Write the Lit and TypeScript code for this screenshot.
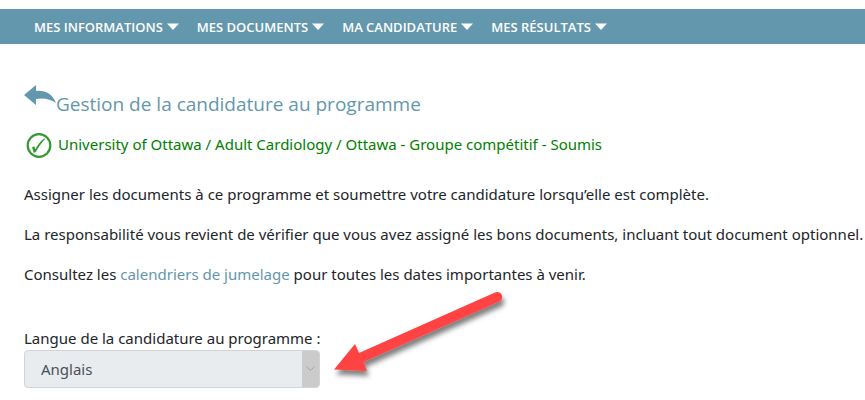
import { LitElement, html, css } from "lit";
import { customElement } from "lit/decorators.js";

const MENUS = ["Mes informations", "Mes documents", "Ma candidature", "Mes résultats"];

@customElement("app-root")
export class AppRoot extends LitElement {
  static styles = css`
    :host {
      display: block;
      padding-top: 9px;
      background: #fff;
      color: #212529;
      font: 15px/24px "Noto Sans", "Open Sans", sans-serif;
    }
    .nav {
      display: flex;
      gap: 18px;
      padding: 0 34px;
      background: #6397ad;
    }
    .menu {
      display: flex;
      align-items: center;
      gap: 4px;
      height: 35px;
      padding: 0;
      border: 0;
      background: none;
      color: #fff;
      font: 600 13px/20px "Open Sans", "Noto Sans", sans-serif;
      text-transform: uppercase;
      white-space: nowrap;
    }
    .caret {
      width: 12px;
      height: 7px;
    }
    .content {
      padding: 40px 0 12px 24px;
    }
    .title {
      display: flex;
      align-items: flex-start;
      margin: 0;
      color: #6397ad;
      font-family: "Open Sans", "Noto Sans", sans-serif;
      font-size: 19px;
      font-weight: 400;
      line-height: 40px;
    }
    .back {
      display: block;
      width: 32px;
      height: 22px;
    }
    .status {
      display: flex;
      align-items: flex-start;
      gap: 6px;
      margin: 8px 0 0;
      padding-left: 2px;
      color: #008000;
    }
    .tick {
      width: 26px;
      height: 26px;
    }
    .text {
      margin: 0 0 16px;
      white-space: nowrap;
    }
    .status + .text {
      margin-top: 24px;
    }
    .link {
      color: #6397ad;
      text-decoration: none;
    }
    .field {
      position: relative;
      display: flex;
      flex-direction: column;
      align-items: flex-start;
      margin-top: 40px;
    }
    .select-box {
      position: relative;
      width: 296px;
    }
    .select {
      display: block;
      width: 100%;
      height: 38px;
      padding: 0 24px 0 16px;
      border: 1px solid #ced4da;
      border-radius: 4px;
      appearance: none;
      background: #e9ecef;
      color: #495057;
      font: inherit;
      opacity: 1;
    }
    .drop {
      position: absolute;
      top: 1px;
      right: 1px;
      bottom: 1px;
      display: flex;
      align-items: center;
      justify-content: center;
      width: 17px;
      border-radius: 0 3px 3px 0;
      background: #cbcbcb;
      pointer-events: none;
    }
    .pointer {
      position: absolute;
      left: 300px;
      top: -46px;
      width: 190px;
      height: 110px;
      pointer-events: none;
    }
  `;

  render() {
    return html`
      <nav class="nav">
        ${MENUS.map(
          (name) => html`<button class="menu" type="button">
            ${name}
            <svg class="caret" viewBox="0 0 12 7" aria-hidden="true"><path d="M0 0.5h12L6 7z" fill="#fff" /></svg>
          </button>`
        )}
      </nav>
      <main class="content">
        <h1 class="title">
          <a href="#" aria-label="Retour">
            <svg class="back" viewBox="0 0 32 22" aria-hidden="true">
              <path d="M0 11 12 1v6C20 6 28 9 32 19 26 15 20 13.500 12 15v6z" fill="#6397ad" />
            </svg>
          </a>
          Gestion de la candidature au programme
        </h1>
        <p class="status">
          <svg class="tick" viewBox="0 0 26 26" fill="none" aria-hidden="true">
            <circle cx="13" cy="13.500" r="11.300" stroke="#339933" stroke-width="2.200" />
            <path d="M6 15.200 8.300 14.300 9.300 17.300C11.500 13 14.500 9 18.300 6.200L19 7C15.500 11 12.500 15 10 19.800L7.800 21z" fill="#339933" />
          </svg>
          University of Ottawa / Adult Cardiology / Ottawa - Groupe compétitif - Soumis
        </p>
        <p class="text">Assigner les documents à ce programme et soumettre votre candidature lorsqu’elle est complète.</p>
        <p class="text">La responsabilité vous revient de vérifier que vous avez assigné les bons documents, incluant tout document optionnel.</p>
        <p class="text">Consultez les <a class="link" href="#">calendriers de jumelage</a> pour toutes les dates importantes à venir.</p>
        <div class="field">
          <label for="langue">Langue de la candidature au programme :</label>
          <div class="select-box">
            <select class="select" id="langue" disabled>
              <option>Anglais</option>
            </select>
            <span class="drop">
              <svg width="9" height="6" viewBox="0 0 9 6" fill="none" aria-hidden="true"><path d="M.5.5l4 4 4-4" stroke="#a3a3a3" /></svg>
            </span>
          </div>
          <svg class="pointer" viewBox="0 0 190 110" aria-hidden="true">
            <defs>
              <filter id="shade" x="-10%" y="-10%" width="130%" height="140%">
                <feDropShadow dx="2" dy="5" stdDeviation="2.500" flood-color="#000" flood-opacity=".5" />
              </filter>
            </defs>
            <g filter="url(#shade)" fill="#ff4343">
              <path d="M10 89.500 31 64l4 9L171 12.500a5 5 0 0 1 4.500 9L39.500 82l3.500 9z" />
            </g>
          </svg>
        </div>
      </main>
    `;
  }
}
